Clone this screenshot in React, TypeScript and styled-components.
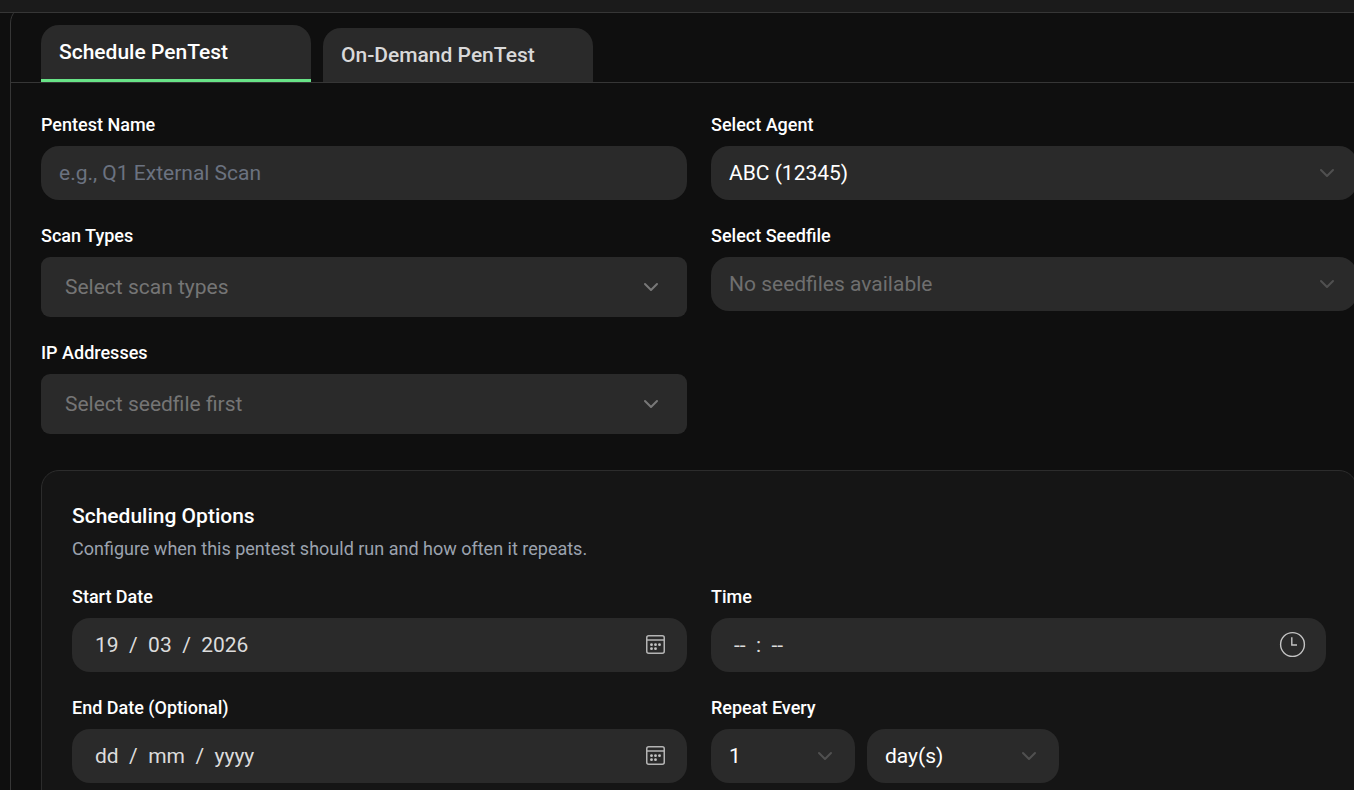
import React from "react";
import styled, { createGlobalStyle, css } from "styled-components";
import { ChevronDown } from "lucide-react";

const GlobalStyle = createGlobalStyle`
  *, *::before, *::after { box-sizing: border-box; }
  body {
    margin: 0;
    background: #0f0f0f;
    color: #ffffff;
    font-family: Roboto, "Liberation Sans", sans-serif;
    font-size: 21px;
  }
  button, input, select { font: inherit; }
`;

const Page = styled.div`
  height: 100vh;
  overflow: hidden;
  display: flex;
  flex-direction: column;
`;

const TopBar = styled.header`
  flex: none;
  height: 13px;
  background: #1b1b1b;
  border-bottom: 1px solid #363636;
`;

const Viewport = styled.main`
  flex: 1;
  min-height: 0;
  overflow: hidden;
  padding-left: 10px;
`;

const Panel = styled.div`
  margin: -8px -34px 0 0;
  padding-top: 19px;
  border: 1px solid #363636;
  border-radius: 18px;
`;

const Tabs = styled.div`
  display: flex;
  align-items: flex-end;
  gap: 12px;
  height: 58px;
  margin-bottom: 30px;
  padding: 0 30px;
  border-bottom: 1px solid #363636;
`;

const Tab = styled.button<{ $active?: boolean }>`
  width: 270px;
  height: ${(p) => (p.$active ? 57 : 54)}px;
  padding: 0 18px;
  border: 0;
  border-bottom: ${(p) => (p.$active ? "3px solid #68e387" : "0")};
  border-radius: 18px 18px 0 0;
  background: #2a2a2a;
  color: ${(p) => (p.$active ? "#ffffff" : "#d9d9d9")};
  font-weight: 500;
  text-align: left;
`;

const Form = styled.form`
  padding: 0 30px 30px;
`;

const Grid = styled.div`
  display: grid;
  grid-template-columns: 1fr 1fr;
  align-items: start;
  gap: 24px;
`;

const Field = styled.div`
  display: flex;
  flex-direction: column;
  gap: 9px;
  min-width: 0;
`;

const Label = styled.label`
  font-size: 18px;
  line-height: 24px;
  font-weight: 500;
`;

const control = css`
  width: 100%;
  height: 54px;
  margin: 0;
  padding: 0 18px;
  border: 0;
  border-radius: 18px;
  outline: none;
  background: #2a2a2a;
  color: #ffffff;
`;

const TextInput = styled.input`
  ${control}
  &::placeholder { color: #6b7280; opacity: 1; }
`;

const SegmentInput = styled.input`
  ${control}
  padding: 0 60px 0 23px;
  color: #dcdcdc;
  &::placeholder { color: #dcdcdc; opacity: 1; }
`;

const Select = styled.select`
  ${control}
  appearance: none;
  opacity: 1;
  &:disabled { color: #6f6f6f; }
`;

const MultiSelect = styled.button`
  ${control}
  display: flex;
  align-items: center;
  justify-content: space-between;
  height: 60px;
  padding: 0 24px;
  border-radius: 9px;
  color: #757575;
`;

const Stack = styled.div<{ $width?: number }>`
  display: grid;
  align-items: center;
  width: ${(p) => (p.$width ? `${p.$width}px` : "100%")};
  > * { grid-area: 1 / 1; }
  > svg {
    justify-self: end;
    margin-right: 18px;
    pointer-events: none;
  }
`;

const Row = styled.div`
  display: flex;
  gap: 12px;
`;

const Card = styled.section`
  margin-top: 36px;
  padding: 30px;
  border: 1px solid #2c2c2c;
  border-radius: 18px;
  background: #151515;
`;

const CardTitle = styled.h2`
  margin: 0 0 6px;
  font-size: 21px;
  line-height: 30px;
  font-weight: 500;
`;

const CardText = styled.p`
  margin: 0 0 24px;
  color: #9ca3af;
  font-size: 18px;
  line-height: 24px;
`;

const CalendarIcon = () => (
  <svg width="27" height="27" viewBox="0 0 27 27" fill="none" stroke="#b4b4b4" aria-hidden="true">
    <rect x="4.75" y="3.75" width="17.5" height="17.5" rx="2" strokeWidth="1.5" />
    <path d="M4.5 8h18" strokeWidth="1.5" />
    <g fill="#c4c4c4" stroke="none">
      <circle cx="9.5" cy="12.7" r="1.4" />
      <circle cx="13.5" cy="12.7" r="1.4" />
      <circle cx="17.5" cy="12.7" r="1.4" />
      <circle cx="9.5" cy="16.7" r="1.4" />
      <circle cx="13.5" cy="16.7" r="1.4" />
    </g>
  </svg>
);

const ClockIcon = () => (
  <svg width="31" height="31" viewBox="0 0 31 31" fill="none" stroke="#c4c4c4" strokeWidth="1.4" aria-hidden="true">
    <circle cx="15.5" cy="14.5" r="11.9" />
    <path d="M14.8 7.2v7.8h5.2" />
  </svg>
);

const Chevron = ({ color = "#505050" }: { color?: string }) => (
  <ChevronDown size={24} color={color} strokeWidth={2} aria-hidden="true" />
);

export default function App() {
  return (
    <>
      <GlobalStyle />
      <Page>
        <TopBar />
        <Viewport>
          <Panel>
            <Tabs role="tablist">
              <Tab type="button" role="tab" aria-selected="true" $active>Schedule PenTest</Tab>
              <Tab type="button" role="tab" aria-selected="false">On-Demand PenTest</Tab>
            </Tabs>
            <Form>
              <Grid>
                <Field>
                  <Label htmlFor="name">Pentest Name</Label>
                  <TextInput id="name" placeholder="e.g., Q1 External Scan" />
                </Field>
                <Field>
                  <Label htmlFor="agent">Select Agent</Label>
                  <Stack>
                    <Select id="agent"><option>ABC (12345)</option></Select>
                    <Chevron />
                  </Stack>
                </Field>
                <Field>
                  <Label htmlFor="types">Scan Types</Label>
                  <MultiSelect id="types" type="button" aria-haspopup="listbox">
                    Select scan types
                    <Chevron color="#787878" />
                  </MultiSelect>
                </Field>
                <Field>
                  <Label htmlFor="seedfile">Select Seedfile</Label>
                  <Stack>
                    <Select id="seedfile" disabled><option>No seedfiles available</option></Select>
                    <Chevron />
                  </Stack>
                </Field>
                <Field>
                  <Label htmlFor="ips">IP Addresses</Label>
                  <MultiSelect id="ips" type="button" aria-haspopup="listbox">
                    Select seedfile first
                    <Chevron color="#787878" />
                  </MultiSelect>
                </Field>
              </Grid>
              <Card>
                <CardTitle>Scheduling Options</CardTitle>
                <CardText>Configure when this pentest should run and how often it repeats.</CardText>
                <Grid>
                  <Field>
                    <Label htmlFor="start">Start Date</Label>
                    <Stack>
                      <SegmentInput id="start" defaultValue="19  /  03  /  2026" />
                      <CalendarIcon />
                    </Stack>
                  </Field>
                  <Field>
                    <Label htmlFor="time">Time</Label>
                    <Stack>
                      <SegmentInput id="time" placeholder="--  :  --" />
                      <ClockIcon />
                    </Stack>
                  </Field>
                  <Field>
                    <Label htmlFor="end">End Date (Optional)</Label>
                    <Stack>
                      <SegmentInput id="end" placeholder="dd  /  mm  /  yyyy" />
                      <CalendarIcon />
                    </Stack>
                  </Field>
                  <Field>
                    <Label htmlFor="every">Repeat Every</Label>
                    <Row>
                      <Stack $width={144}>
                        <Select id="every"><option>1</option></Select>
                        <Chevron />
                      </Stack>
                      <Stack $width={192}>
                        <Select aria-label="Repeat unit"><option>day(s)</option></Select>
                        <Chevron />
                      </Stack>
                    </Row>
                  </Field>
                </Grid>
              </Card>
            </Form>
          </Panel>
        </Viewport>
      </Page>
    </>
  );
}
